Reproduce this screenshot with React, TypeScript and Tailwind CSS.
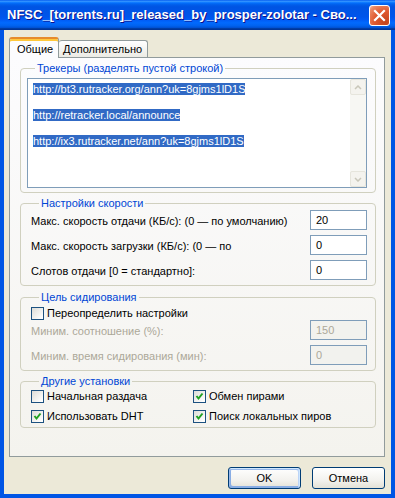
import type { ReactNode } from 'react';

const trackers = [
  'http://bt3.rutracker.org/ann?uk=8gjms1lD1S',
  'http://retracker.local/announce',
  'http://ix3.rutracker.net/ann?uk=8gjms1lD1S',
];

function GroupBox({ title, className, children }: { title: string; className?: string; children: ReactNode }) {
  return (
    <fieldset className={`min-w-0 border border-[#D0D0BF] rounded-[4px] ${className ?? ''}`}>
      <legend className="ml-[8px] px-[2px] leading-[13px] text-[#0046D5]">{title}</legend>
      {children}
    </fieldset>
  );
}

function Checkbox({ checked, label }: { checked?: boolean; label: string }) {
  return (
    <div className="flex items-center h-[13px]">
      <div className="w-[13px] h-[13px] border border-[#1C5180] bg-[linear-gradient(135deg,#DCDCD7_0%,#FFFFFF_90%)] flex items-center justify-center shrink-0">
        {checked && (
          <svg width="11" height="11" viewBox="0 0 11 11">
            <path d="M2.5 5 L4.5 7.5 L8.5 2.5" fill="none" stroke="#21A121" strokeWidth="2" />
          </svg>
        )}
      </div>
      <span className="ml-[3px] leading-[13px] whitespace-nowrap">{label}</span>
    </div>
  );
}

function NumberRow({ label, value, disabled }: { label: string; value: string; disabled?: boolean }) {
  return (
    <div className="flex items-center h-[20px]">
      <span className={`flex-1 pt-[3px] whitespace-nowrap overflow-hidden ${disabled ? 'text-[#ACA899]' : ''}`}>{label}</span>
      <div
        className={`w-[57px] h-[20px] border border-[#7F9DB9] pl-[5px] flex items-center ${
          disabled ? 'bg-[#F2F2EE] text-[#ACA899]' : 'bg-white'
        }`}
      >
        {value}
      </div>
    </div>
  );
}

function XpButton({ children, isDefault }: { children: ReactNode; isDefault?: boolean }) {
  return (
    <button
      className={`w-[73px] h-[22px] border border-[#003C74] rounded-[3px] bg-[linear-gradient(180deg,#FFFFFF_0%,#F3F2EE_60%,#E4E1D6_100%)] ${
        isDefault
          ? 'shadow-[inset_-1px_1px_#CEE7FF,inset_1px_2px_#98B8EA,inset_-2px_2px_#BCD4F6,inset_1px_-1px_#89ADE4,inset_2px_-2px_#89ADE4]'
          : ''
      }`}
    >
      {children}
    </button>
  );
}

export default function App() {
  return (
    <div className="w-[395px] h-[498px] flex flex-col font-['Liberation_Sans',Arial,sans-serif] text-[11px] text-black">
      {/* title bar */}
      <div className="h-[30px] shrink-0 flex items-center pl-[7px] pr-[5px] bg-[linear-gradient(180deg,#0058EE_0%,#3593FF_4%,#288EFF_6%,#127DFF_8%,#036FFC_10%,#0262EE_14%,#0057E5_20%,#0054E3_24%,#0055EB_56%,#005BF5_66%,#026AFE_76%,#0062EF_86%,#0052D6_92%,#0040AB_94%,#003092_100%)]">
        <span className="flex-1 text-white font-bold text-[13px] whitespace-nowrap [text-shadow:1px_1px_#0F1089]">
          NFSC_[torrents.ru]_released_by_prosper-zolotar - Сво...
        </span>
        <div className="w-[21px] h-[21px] rounded-[3px] border border-white bg-[radial-gradient(circle_at_80%_85%,#C4441C_0%,#E0592F_50%,#EB8A66_85%,#F6C2A8_100%)] flex items-center justify-center">
          <svg width="13" height="13" viewBox="0 0 13 13">
            <path d="M2 2 L11 11 M11 2 L2 11" stroke="white" strokeWidth="2.2" strokeLinecap="square" />
          </svg>
        </div>
      </div>

      {/* body */}
      <div className="flex-1 flex flex-col bg-[#ECE9D8] border-x-4 border-b-4 border-[#0055E5] pl-[5px] pr-[6px] pt-[7px]">
        {/* tabs */}
        <div className="flex items-end h-[21px] -mb-px relative z-10">
          <div className="w-[50px] h-[21px] border-x border-t-2 border-[#919B9C] border-t-[#E68B2C] rounded-t-[3px] bg-[#FCFCFE] shadow-[inset_0_2px_#FFC83C] flex items-center pl-[7px] pt-px">
            Общие
          </div>
          <div className="w-[89px] h-[17px] mb-px border-r border-t border-[#919B9C] rounded-t-[3px] bg-[linear-gradient(180deg,#FFFFFF_0%,#F3F3EF_60%,#ECEBE5_100%)] flex items-center pl-[4px]">
            Дополнительно
          </div>
        </div>

        {/* tab page */}
        <div className="h-[400px] border border-[#919B9C] bg-[linear-gradient(180deg,#FCFCFE_0%,#F4F3EE_100%)] pl-[10px] pr-[8px] pt-[4px]">
          <GroupBox title="Трекеры (разделять пустой строкой)" className="pl-[6px] pr-[8px] pb-[4px]">
            <div className="mt-[3px] h-[110px] border border-[#7F9DB9] bg-white flex">
              <div className="flex-1 pl-[5px] pt-[4px] leading-[13px] flex flex-col gap-[13px]">
                {trackers.map((t) => (
                  <div key={t}>
                    <span className="bg-[#316AC5] text-white">{t}</span>
                  </div>
                ))}
              </div>
              <div className="w-[16px] bg-[#F7F7F3] flex flex-col justify-between">
                <div className="h-[16px] border border-[#E6E5DC] rounded-[2px] bg-[#F4F3EE] flex items-center justify-center">
                  <svg width="8" height="5" viewBox="0 0 8 5">
                    <path d="M1 4 L4 1 L7 4" fill="none" stroke="#C9C7BA" strokeWidth="1.5" />
                  </svg>
                </div>
                <div className="h-[16px] border border-[#E6E5DC] rounded-[2px] bg-[#F4F3EE] flex items-center justify-center">
                  <svg width="8" height="5" viewBox="0 0 8 5">
                    <path d="M1 1 L4 4 L7 1" fill="none" stroke="#C9C7BA" strokeWidth="1.5" />
                  </svg>
                </div>
              </div>
            </div>
          </GroupBox>

          <GroupBox title="Настройки скорости" className="mt-[4px] pl-[10px] pr-[8px] pb-[5px]">
            <div className="flex flex-col gap-[5px]">
              <NumberRow label="Макс. скорость отдачи (КБ/с): (0 — по умолчанию)" value="20" />
              <NumberRow label="Макс. скорость загрузки (КБ/с): (0 — по" value="0" />
              <NumberRow label="Слотов отдачи [0 = стандартно]:" value="0" />
            </div>
          </GroupBox>

          <GroupBox title="Цель сидирования" className="mt-[5px] pl-[10px] pr-[8px] pb-[5px]">
            <div className="pt-[3px]">
              <Checkbox label="Переопределить настройки" />
            </div>
            <div className="flex flex-col gap-[5px]">
              <NumberRow label="Миним. соотношение (%):" value="150" disabled />
              <NumberRow label="Миним. время сидирования (мин):" value="0" disabled />
            </div>
          </GroupBox>

          <GroupBox title="Другие установки" className="mt-[4px] pl-[10px] pr-[8px] pb-[4px]">
            <div className="pt-[2px] grid grid-cols-[162px_1fr] gap-y-[7px]">
              <Checkbox label="Начальная раздача" />
              <Checkbox checked label="Обмен пирами" />
              <Checkbox checked label="Использовать DHT" />
              <Checkbox checked label="Поиск локальных пиров" />
            </div>
          </GroupBox>
        </div>

        {/* buttons */}
        <div className="mt-[10px] flex justify-end gap-[11px]">
          <XpButton isDefault>OK</XpButton>
          <XpButton>Отмена</XpButton>
        </div>
      </div>
    </div>
  );
}
